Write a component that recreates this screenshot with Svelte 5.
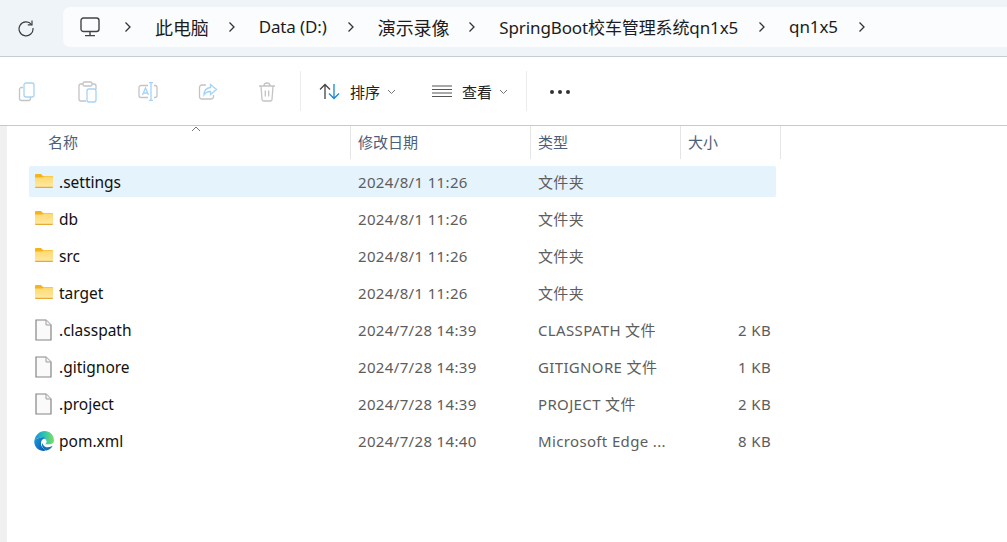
<script>
  const crumbs = ["此电脑", "Data (D:)", "演示录像", "SpringBoot校车管理系统qn1x5", "qn1x5"];
  const columns = ["名称", "修改日期", "类型", "大小"];
  const rows = [
    { name: ".settings", date: "2024/8/1 11:26", type: "文件夹", size: "", icon: "folder", selected: true },
    { name: "db", date: "2024/8/1 11:26", type: "文件夹", size: "", icon: "folder" },
    { name: "src", date: "2024/8/1 11:26", type: "文件夹", size: "", icon: "folder" },
    { name: "target", date: "2024/8/1 11:26", type: "文件夹", size: "", icon: "folder" },
    { name: ".classpath", date: "2024/7/28 14:39", type: "CLASSPATH 文件", size: "2 KB", icon: "file" },
    { name: ".gitignore", date: "2024/7/28 14:39", type: "GITIGNORE 文件", size: "1 KB", icon: "file" },
    { name: ".project", date: "2024/7/28 14:39", type: "PROJECT 文件", size: "2 KB", icon: "file" },
    { name: "pom.xml", date: "2024/7/28 14:40", type: "Microsoft Edge ...", size: "8 KB", icon: "edge" }
  ];
</script>

<div class="window">
  <header class="navbar">
    <svg class="refresh" width="18" height="18" viewBox="0 0 18 18" fill="none" stroke="#3c3c3c" stroke-width="1.2">
      <path d="M14.6 5.6A7 7 0 1 0 16 9" />
      <path d="M15 1.6v4.2h-4.2" />
    </svg>
    <nav class="address">
      <svg class="pc" width="20" height="20" viewBox="0 0 20 20" fill="none" stroke="#444" stroke-width="1.4">
        <rect x="1" y="1" width="18" height="13.5" rx="2.5" />
        <path d="M10 14.5v3.5M5 18.6h10" />
      </svg>
      {#each crumbs as crumb, i}
        <svg class="chev" width="8" height="12" viewBox="0 0 8 12" fill="none" stroke="#333" stroke-width="1.3"><path d="M1.5 1.5 6 6l-4.500 4.500" /></svg>
        <span class="crumb" class:wide={i == 0 || i == 2}>{crumb}</span>
      {/each}
      <svg class="chev" width="8" height="12" viewBox="0 0 8 12" fill="none" stroke="#333" stroke-width="1.3"><path d="M1.5 1.5 6 6l-4.500 4.500" /></svg>
    </nav>
  </header>

  <section class="toolbar">
    <div class="actions">
      <svg width="20" height="20" viewBox="0 0 20 20" fill="none" stroke-width="1.3">
        <path d="M5 5.500H3.500a2 2 0 0 0-2 2v9a2 2 0 0 0 2 2h7a2 2 0 0 0 2-2V15" stroke="#c4c4c4" />
        <rect x="9" y="1" width="10" height="14" rx="2" transform="translate(-3 0)" stroke="#a5d3f8" />
      </svg>
      <svg width="20" height="22" viewBox="0 0 20 22" fill="none" stroke-width="1.3">
        <path d="M5 3H3a2 2 0 0 0-2 2v13a2 2 0 0 0 2 2h5M14 3h2a2 2 0 0 1 2 2v3" stroke="#c4c4c4" />
        <rect x="5" y="1" width="9" height="4" rx="1.500" stroke="#c4c4c4" />
        <rect x="9" y="8" width="9" height="13" rx="2" stroke="#a5d3f8" />
      </svg>
      <svg width="20" height="20" viewBox="0 0 20 20" fill="none" stroke-width="1.3">
        <path d="M10 3.500H3a2 2 0 0 0-2 2v8a2 2 0 0 0 2 2h7M16 3.500h1a2 2 0 0 1 2 2v8a2 2 0 0 1-2 2h-1" stroke="#c4c4c4" />
        <path d="M4.500 13 7.500 6l3 7M5.500 11h4" stroke="#a5d3f8" />
        <path d="M13 .7v17.600M11 .7h4M11 18.300h4" stroke="#a5d3f8" />
      </svg>
      <svg width="20" height="20" viewBox="0 0 20 20" fill="none" stroke-width="1.3">
        <path d="M8 3H4a2.500 2.500 0 0 0-2.500 2.500v9A2.500 2.500 0 0 0 4 17h9a2.500 2.500 0 0 0 2.500-2.500V13" stroke="#c4c4c4" />
        <path d="M12.500 2.500 18.500 7.500l-6 5v-3c-3 0-5 1-6.500 3.500 0-4.500 2.500-7 6.500-7.500z" stroke="#a5d3f8" />
      </svg>
      <svg width="18" height="20" viewBox="0 0 18 20" fill="none" stroke="#c4c4c4" stroke-width="1.3">
        <path d="M1 4h16M6 4c0-1.700 1.300-3 3-3s3 1.300 3 3M3 4l1 13.500a1.500 1.500 0 0 0 1.500 1.500h7a1.500 1.500 0 0 0 1.500-1.500L15 4M7.300 8.500v6M10.700 8.500v6" />
      </svg>
    </div>
    <div class="sep"></div>
    <div class="tool sort">
      <svg width="21" height="17" viewBox="0 0 21 17" fill="none" stroke-width="1.300">
        <path d="M6 16V1.500M1 6.500l5-5 5 5" stroke="#444" />
        <path d="M15 1v14.500M10 10.500l5 5 5-5" stroke="#1a86d8" />
      </svg>
      <span>排序</span>
      <svg class="caret" width="9" height="6" viewBox="0 0 9 6" fill="none" stroke="#777" stroke-width="1"><path d="M1 1l3.500 3.500L8 1" /></svg>
    </div>
    <div class="tool view">
      <svg width="20" height="13" viewBox="0 0 20 13" fill="none" stroke="#555" stroke-width="1.200"><path d="M0 1h20M0 4.500h20M0 8h20M0 11.500h20" /></svg>
      <span>查看</span>
      <svg class="caret" width="9" height="6" viewBox="0 0 9 6" fill="none" stroke="#777" stroke-width="1"><path d="M1 1l3.500 3.500L8 1" /></svg>
    </div>
    <div class="sep"></div>
    <div class="more"><i></i><i></i><i></i></div>
  </section>

  <main class="content">
    <div class="list">
      <div class="heads">
        {#each columns as col, i}
          <div class="head">
            {#if i == 0}
              <svg class="sort-arrow" width="10" height="6" viewBox="0 0 10 6" fill="none" stroke="#777" stroke-width="1"><path d="M1 5l4-4 4 4" /></svg>
            {/if}
            {col}
          </div>
        {/each}
      </div>
      {#each rows as row}
        <div class="row" class:selected={row.selected}>
          <div class="cell name">
            {#if row.icon == "folder"}
              <svg class="folder" width="18" height="14" viewBox="0 0 18 14">
                <defs>
                  <linearGradient id="folderFill" x1="0" y1="0" x2="0" y2="1">
                    <stop offset="0" stop-color="#fdd96f" />
                    <stop offset="1" stop-color="#ffeaa6" />
                  </linearGradient>
                </defs>
                <path d="M0 1a1 1 0 0 1 1-1h5l2 2h9a1 1 0 0 1 1 1v3H0z" fill="#f6b41c" />
                <path d="M0 3.500h7L9 2.500h8a1 1 0 0 1 1 1V13a1 1 0 0 1-1 1H1a1 1 0 0 1-1-1z" fill="url(#folderFill)" />
                <path d="M0 12.800h18V13a1 1 0 0 1-1 1H1a1 1 0 0 1-1-1z" fill="#e6aa3a" />
              </svg>
            {:else if row.icon == "file"}
              <svg class="file" width="17" height="22" viewBox="0 0 17 22">
                <path d="M1 1h10l5 5v15H1z" fill="#fafafa" stroke="#858585" stroke-width="1.200" />
                <path d="M11 1v5h5" fill="#f2f2f2" stroke="#a0a0a0" stroke-width="1" />
              </svg>
            {:else}
              <svg class="edge" width="20" height="20" viewBox="0 0 20 20">
                <defs>
                  <linearGradient id="edgeTop" x1="0" y1="0.500" x2="1" y2="0.500">
                    <stop offset="0" stop-color="#1c8fd8" />
                    <stop offset="0.500" stop-color="#2fc3b4" />
                    <stop offset="1" stop-color="#7fe05a" />
                  </linearGradient>
                  <linearGradient id="edgeBody" x1="0" y1="0" x2="1" y2="0.600">
                    <stop offset="0" stop-color="#1a9be0" />
                    <stop offset="1" stop-color="#0a5cab" />
                  </linearGradient>
                </defs>
                <path d="M.5 9C1.500 4 5.500 0 10.500 0 16 0 20 4 20 9.500c0 2.500-2 3.700-4.500 3.700H11c1.600-1 2.100-2.700 1.100-4.300C11 7.200 9 6 7 6.500 4.500 7 2 7.600.5 9z" fill="url(#edgeTop)" />
                <path d="M.5 9C2 7.600 4.500 7 7 6.500c2-.5 3.500 0 4.300 1-2.800-.2-4.300 2.300-4.300 5 0 3 2 5.700 5 6.500L10 20C4 20 -.8 15 .5 9z" fill="url(#edgeBody)" />
                <path d="M10 20c3.800 0 7-2 8.700-5.200-2.200 1.500-5.700 2-7.900.6-1.400-.9-2.300-2.200-2.500-3.700-.6 2-.4 4 .9 5.600 1 1.200 2.100 2 3.200 2.200C11.600 19.800 10.800 20 10 20z" fill="#1273bd" />
              </svg>
            {/if}
            <span>{row.name}</span>
          </div>
          <div class="cell muted">{row.date}</div>
          <div class="cell muted">{row.type}</div>
          <div class="cell muted size">{row.size}</div>
        </div>
      {/each}
    </div>
  </main>
</div>

<style>
  :global(body) {
    margin: 0;
    background: #fff;
  }
  .window {
    width: 1007px;
    height: 542px;
    overflow: hidden;
    font-family: "Noto Sans", "Noto Sans CJK SC", sans-serif;
    font-size: 15px;
    color: #1c1c1c;
    display: flex;
    flex-direction: column;
  }
  .navbar {
    height: 57px;
    box-sizing: border-box;
    background: #eff4f8;
    border-bottom: 1px solid #c5cdd2;
    display: flex;
    align-items: center;
    padding: 0 0 0 17px;
    flex: none;
  }
  .refresh {
    margin-top: -1px;
  }
  .address {
    margin-left: 28px;
    margin-bottom: 3px;
    flex: 1;
    height: 40px;
    background: #fafcfe;
    border-radius: 7px 0 0 7px;
    display: flex;
    align-items: center;
    padding-left: 17px;
  }
  .pc {
    margin-right: 24px;
  }
  .chev {
    margin-right: 23px;
  }
  .crumb {
    margin-right: 20px;
    font-size: 17px;
    letter-spacing: -0.12px;
    white-space: nowrap;
  }
  .wide {
    font-size: 18px;
    margin-right: 19px;
  }
  .toolbar {
    height: 69px;
    box-sizing: border-box;
    border-bottom: 1px solid #c3cbcc;
    display: flex;
    align-items: center;
    flex: none;
    font-size: 15px;
  }
  .actions {
    display: flex;
    align-items: center;
    gap: 40px;
    width: 300px;
    box-sizing: border-box;
    padding-left: 18px;
    margin-top: 1px;
  }
  .sep {
    width: 1px;
    height: 40px;
    background: #ececec;
  }
  .tool {
    display: flex;
    align-items: center;
    margin-top: 1px;
  }
  .tool span {
    margin: 0 7px 0 10px;
    color: #222;
  }
  .sort {
    margin-left: 18px;
  }
  .view {
    margin-left: 36px;
    width: 80px;
    margin-right: 14px;
  }
  .more {
    display: flex;
    gap: 4px;
    margin-left: 23px;
    margin-top: 1px;
  }
  .more i {
    width: 4px;
    height: 4px;
    border-radius: 50%;
    background: #333;
  }
  .content {
    flex: 1;
    border-left: 7px solid #f0f0f0;
    padding-left: 22px;
  }
  .heads {
    display: grid;
    grid-template-columns: 322px 180px 150px 100px;
    height: 32px;
  }
  .head {
    position: relative;
    box-sizing: border-box;
    padding-left: 7px;
    border-right: 1px solid #e5e5e5;
    line-height: 33px;
    font-size: 15px;
    color: #4c607a;
  }
  .head:first-child {
    padding-left: 19px;
  }
  .sort-arrow {
    position: absolute;
    left: 162px;
    top: 0;
  }
  .list {
    width: 752px;
  }
  .row {
    display: grid;
    grid-template-columns: 322px 180px 150px 95px;
    height: 31px;
    margin-top: 6px;
    border-radius: 2px;
    align-items: center;
    width: 747px;
  }
  .heads + .row {
    margin-top: 8px;
  }
  .selected {
    background: #e5f3fd;
  }
  .name {
    display: flex;
    align-items: center;
    gap: 6px;
    padding-left: 5px;
    font-size: 15.5px;
    color: #111;
  }
  .folder {
    margin-left: 1px;
    margin-top: -1px;
  }
  .file {
    margin-left: 1px;
    margin-right: 7px;
    margin-top: 1px;
  }
  .file + span {
    margin-left: -6px;
  }
  .edge {
    margin-right: -1px;
  }
  .muted {
    padding-left: 7px;
    color: #5d5d5d;
    font-size: 15px;
    letter-spacing: 0.35px;
    white-space: nowrap;
  }
  .size {
    text-align: right;
    padding-right: 5px;
  }
</style>
